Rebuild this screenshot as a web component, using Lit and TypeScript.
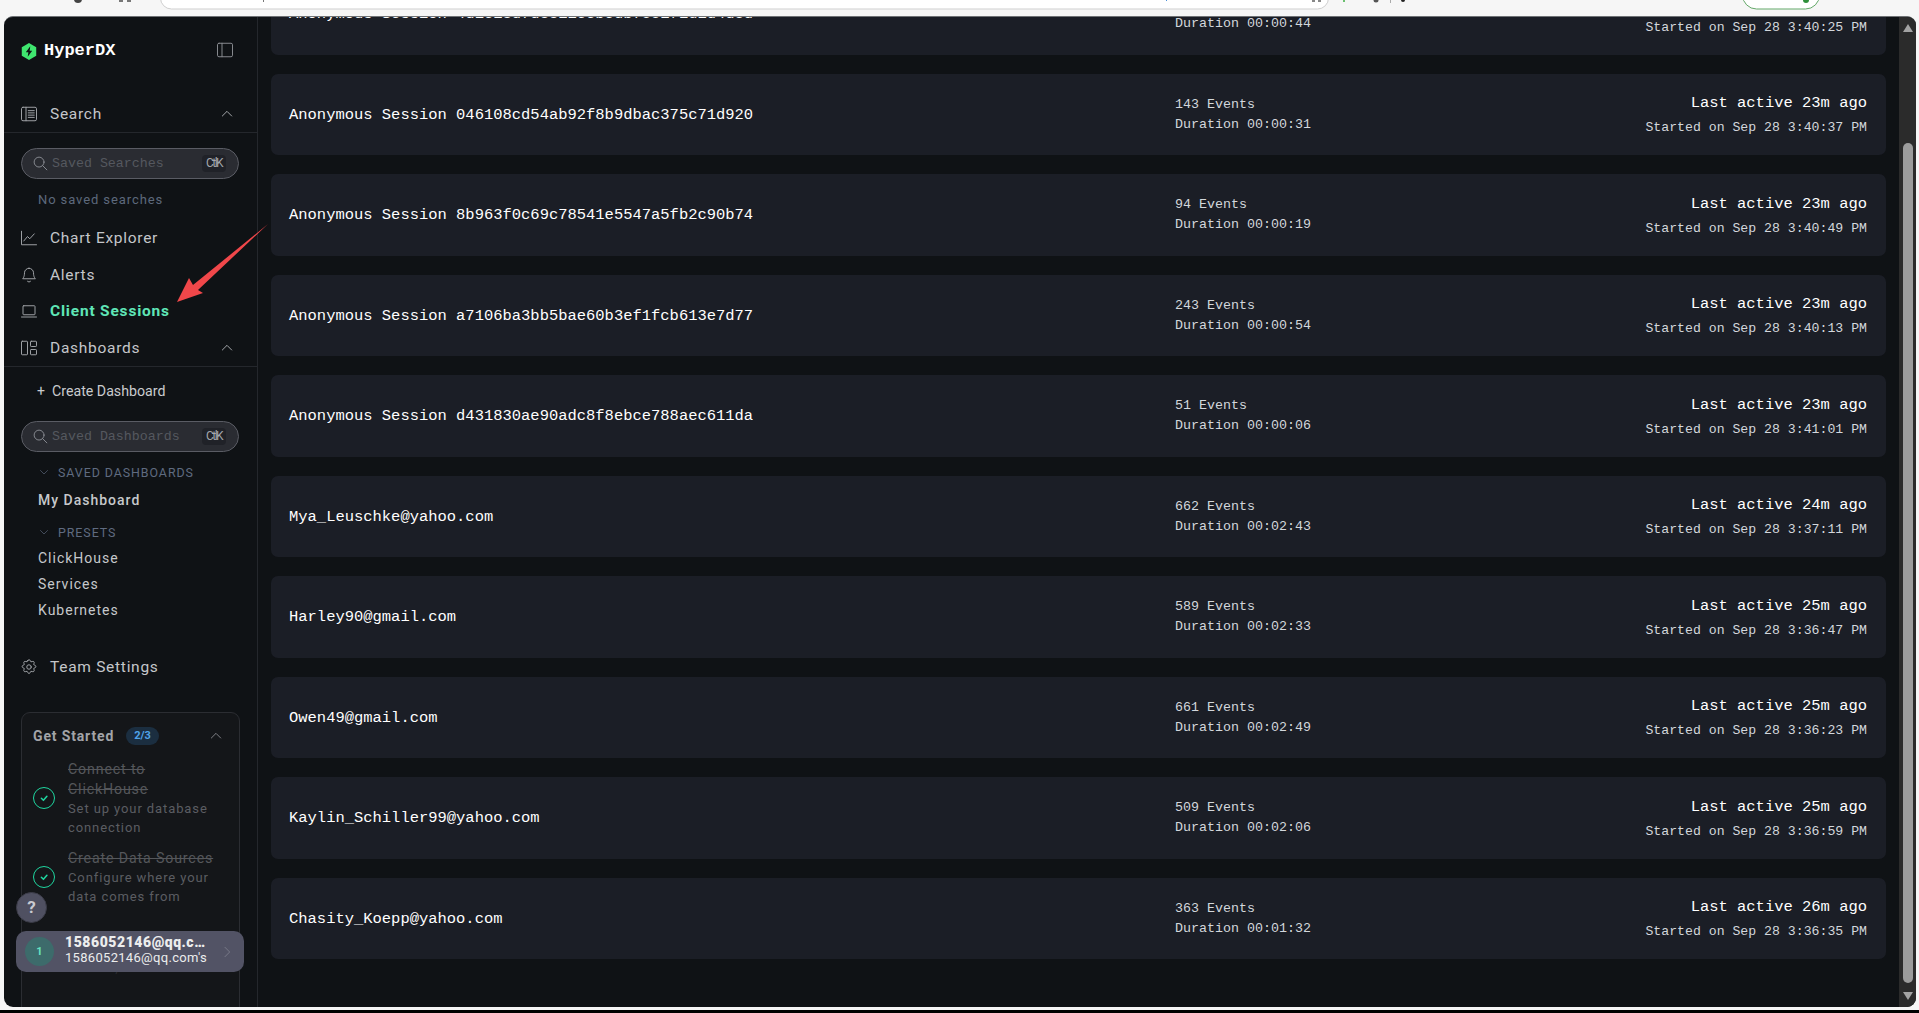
import { LitElement, html, css, svg } from "lit";
import { customElement } from "lit/decorators.js";

const sessions = [
  ["Anonymous Session 4d1e18d7d3811eebedb7551f1d1d4d3d", "212 Events", "Duration 00:00:44", "Last active 23m ago", "Started on Sep 28 3:40:25 PM"],
  ["Anonymous Session 046108cd54ab92f8b9dbac375c71d920", "143 Events", "Duration 00:00:31", "Last active 23m ago", "Started on Sep 28 3:40:37 PM"],
  ["Anonymous Session 8b963f0c69c78541e5547a5fb2c90b74", "94 Events", "Duration 00:00:19", "Last active 23m ago", "Started on Sep 28 3:40:49 PM"],
  ["Anonymous Session a7106ba3bb5bae60b3ef1fcb613e7d77", "243 Events", "Duration 00:00:54", "Last active 23m ago", "Started on Sep 28 3:40:13 PM"],
  ["Anonymous Session d431830ae90adc8f8ebce788aec611da", "51 Events", "Duration 00:00:06", "Last active 23m ago", "Started on Sep 28 3:41:01 PM"],
  ["Mya_Leuschke@yahoo.com", "662 Events", "Duration 00:02:43", "Last active 24m ago", "Started on Sep 28 3:37:11 PM"],
  ["Harley90@gmail.com", "589 Events", "Duration 00:02:33", "Last active 25m ago", "Started on Sep 28 3:36:47 PM"],
  ["Owen49@gmail.com", "661 Events", "Duration 00:02:49", "Last active 25m ago", "Started on Sep 28 3:36:23 PM"],
  ["Kaylin_Schiller99@yahoo.com", "509 Events", "Duration 00:02:06", "Last active 25m ago", "Started on Sep 28 3:36:59 PM"],
  ["Chasity_Koepp@yahoo.com", "363 Events", "Duration 00:01:32", "Last active 26m ago", "Started on Sep 28 3:36:35 PM"],
];

const ic = (body: unknown, size = 18, cls = "") => html`<svg class="ic ${cls}" width=${size} height=${size} viewBox="0 0 24 24" fill="none" stroke="currentColor" stroke-width="1.300" stroke-linecap="round" stroke-linejoin="round">${body}</svg>`;

const icons = {
  table: svg`<rect x="2" y="3" width="20" height="18" rx="2"/><path d="M8 3v18M11 7.500h8M11 10.500h8M11 13.500h8M11 16.500h8"/>`,
  chart: svg`<path d="M2 3v18h20"/><path d="M5 16l5-6 3 3 6-6.500"/>`,
  bell: svg`<path d="M12 3a6 6 0 0 0-6 6c0 6-2.500 8-2.500 8h17S18 15 18 9a6 6 0 0 0-6-6z"/><path d="M10 20.500c.8 1 3.200 1 4 0"/>`,
  laptop: svg`<rect x="4" y="5" width="16" height="12" rx="1"/><path d="M2 20h20"/>`,
  dash: svg`<rect x="2" y="3" width="8" height="18" rx="1"/><rect x="14" y="3" width="8" height="7" rx="1"/><rect x="14" y="14" width="8" height="7" rx="1"/>`,
  gear: svg`<circle cx="12" cy="12" r="3"/><path d="M10.300 3.600c.4-1.800 3-1.800 3.400 0a1.700 1.700 0 0 0 2.600 1.100c1.500-1 3.400.9 2.400 2.400a1.700 1.700 0 0 0 1.100 2.600c1.800.4 1.800 3 0 3.400a1.700 1.700 0 0 0-1.100 2.600c1 1.500-.9 3.400-2.400 2.400a1.700 1.700 0 0 0-2.600 1.100c-.4 1.800-3 1.800-3.400 0a1.700 1.700 0 0 0-2.600-1.100c-1.500 1-3.400-.9-2.400-2.400a1.700 1.700 0 0 0-1.100-2.600c-1.800-.4-1.800-3 0-3.400a1.700 1.700 0 0 0 1.100-2.600c-1-1.500.9-3.400 2.400-2.400a1.700 1.700 0 0 0 2.600-1.100z"/>`,
  up: svg`<path d="M5 15l7-7 7 7"/>`,
  down: svg`<path d="M5 9l7 7 7-7"/>`,
  right: svg`<path d="M9 5l7 7-7 7"/>`,
  search: svg`<circle cx="10" cy="10" r="7"/><path d="M21 21l-6-6"/>`,
  side: svg`<rect x="2" y="3" width="20" height="18" rx="2"/><path d="M8 3v18"/>`,
  check: svg`<path d="M7.500 12.500l3.500 3.500 6-7" stroke-width="2.600"/>`,
};

@customElement("app-root")
export class AppRoot extends LitElement {
  static styles = css`
    :host { display: block; height: 1013px; background: #f6f6f6; overflow: hidden; font-family: Roboto, "Noto Sans", sans-serif; }
    * { box-sizing: border-box; }
    .chrome { display: block; width: 1919px; height: 16px; }
    .frame { display: flex; height: 991px; margin: 0 3px 0 4px; border-radius: 9px; overflow: hidden; background: #0f1215; border-top: 1px solid #6f7275; }
    .foot { height: 3px; margin-top: 3px; background: #000; }
    .ic { display: block; flex: none; }

    .side { width: 254px; flex: none; border-right: 1px solid #24272c; position: relative; overflow: hidden; color: #c6c8cb; }
    .logo { display: flex; align-items: center; height: 28px; margin-top: 20px; padding: 0 23px 0 17px; }
    .logo svg.hex { margin-right: 7px; }
    .logo b { font: 700 17px/28px "Liberation Mono", monospace; color: #fff; flex: 1; }
    .logo .ic { color: #8a8d92; margin-top: -2px; }

    .nav { display: flex; align-items: center; padding: 0 22px 0 16px; height: 36.700px; font-size: 15.500px; letter-spacing: .72px; color: #c4c6ca; }
    .nav .ic { color: #a0a3a8; margin-right: 12px; }
    .nav span { flex: 1; }
    .nav .ic.chev { margin: 0; color: #b9bcc0; }
    .nav.line { height: 37px; border-bottom: 1px solid #24272c; }
    .nav.act { color: #5fe6b7; font-weight: 700; letter-spacing: .8px; }
    .first { margin-top: 30.500px; }
    .gapa { margin-top: 10px; }
    .gapb { margin-top: 26px; }

    .search { display: flex; align-items: center; height: 31px; margin: 0 18px 0 17px; padding: 0 12px 0 10px; border-radius: 16px; background: #2a2c32; border: 1px solid #5a5c64; color: #8d9096; }
    .search .ic { margin-right: 3px; }
    .search span { flex: 1; font: 13.300px "Liberation Mono", monospace; color: #55585f; white-space: nowrap; }
    .search kbd { width: 24px; height: 17px; border-radius: 4px; background: #202228; color: #a4a7ad; font: 12px/16px Roboto, sans-serif; text-align: center; letter-spacing: -1.500px; }

    .s1 { margin-top: 15px; }
    .none { margin: 11px 0 0 34px; height: 20px; line-height: 20px; font-size: 13px; letter-spacing: .9px; color: #5d697c; }
    .create { display: flex; align-items: center; height: 24px; margin: 12.500px 0 18px 33px; font-size: 14.200px; color: #c9cbce; }
    .create i { font-style: normal; width: 15px; font-size: 14px; }
    .group { display: flex; align-items: center; margin-left: 34px; font-size: 12.400px; letter-spacing: .95px; color: #5f6b80; height: 20px; }
    .group .ic { margin-right: 8px; color: #5f6b80; }
    .g1 { margin-top: 10px; }
    .g2 { margin-top: 9px; }
    .l1 { margin-top: 5px; }
    .l2 { margin-top: 3px; }
    .link { margin-left: 34px; height: 26px; line-height: 26px; font-size: 14px; letter-spacing: 1px; color: #c6c8cb; font-weight: 500; }
    .link.reg { font-weight: 400; }

    .box { margin: 26px 17px 0; height: 320px; border: 1px solid #2b2d32; border-radius: 9px; background: #141619; padding: 0 11px; overflow: hidden; }
    .boxh { display: flex; align-items: center; height: 44px; margin: 1px 0 1px; }
    .boxh b { font-size: 14px; letter-spacing: .85px; color: #a2a4a8; font-weight: 700; }
    .badge { margin-left: 12px; padding: 0 8px; height: 18px; line-height: 18px; border-radius: 9px; background: #1b2e40; color: #4fa3e8; font-size: 11px; font-weight: 700; }
    .boxh .ic { margin-left: auto; margin-right: 4px; color: #8e9095; }
    .item { display: flex; align-items: center; gap: 13px; margin-bottom: 10px; }
    .circle { width: 22px; height: 22px; flex: none; border-radius: 50%; border: 1.300px solid #1fd6a0; color: #1fd6a0; display: flex; align-items: center; justify-content: center; }
    .item div.t { width: 146px; font-size: 13px; letter-spacing: .9px; line-height: 19.500px; color: #5b5d62; }
    .item s { display: block; color: #55575b; font-size: 14.200px; letter-spacing: .85px; line-height: 20px; white-space: normal; }
    .faded { margin: 51px 0 0 35px; font-size: 13px; letter-spacing: .5px; color: #2a2b2f; line-height: 20px; }

    .help { position: absolute; left: 12px; top: 875px; width: 31px; height: 31px; border-radius: 50%; background: #4f5061; border: 1px solid #3b3c48; color: #c9cad0; font: 700 17px/29px Roboto, sans-serif; text-align: center; }
    .user { position: absolute; left: 12px; top: 914px; width: 228px; height: 41px; border-radius: 10px; background: #525365; display: flex; align-items: center; padding: 0 9px; color: #eceded; }
    .av { width: 29px; height: 29px; border-radius: 50%; background: #3d6b6b; color: #66e3c0; font-size: 11px; font-weight: 700; text-align: center; line-height: 29px; flex: none; margin-right: 11px; }
    .uname { width: 146px; flex: none; padding-bottom: 3px; }
    .uname b, .uname span { display: block; overflow: hidden; white-space: nowrap; text-overflow: ellipsis; line-height: 15px; font-size: 13px; letter-spacing: .3px; }
    .uname b { font-weight: 900; font-size: 14px; letter-spacing: .55px; }
    .user .ic { margin-left: auto; color: #7d7e8c; }

    .main { flex: 1; overflow: hidden; padding: 0 13px; }
    .list { display: flex; flex-direction: column; gap: 19px; margin-top: -43.700px; }
    .card { flex: none; height: 81.500px; border-radius: 7px; background: #1b1e26; padding: 0 19px 0 18px; display: flex; align-items: center; font-family: "Liberation Mono", monospace; }
    .title { width: 886px; flex: none; font-size: 15.470px; color: #fff; white-space: nowrap; }
    .mid { font-size: 13.330px; line-height: 20px; color: #d3d7dc; }
    .right { margin-left: auto; text-align: right; }
    .right b { display: block; font-weight: 400; font-size: 15.470px; line-height: 24px; margin-bottom: 3px; color: #fff; }
    .right span { display: block; font-size: 13.200px; line-height: 20px; color: #d3d7dc; }

    .bar { width: 17px; flex: none; background: #2b2b2b; display: flex; flex-direction: column; align-items: center; color: #a3a3a3; padding-top: 7px; }
    .thumb { width: 10px; height: 840px; border-radius: 5px; background: #9c9c9c; margin: 111px 0 9px; }

    .arrow { position: absolute; left: 0; top: 0; pointer-events: none; }
  `;

  render() {
    return html`
      <svg class="chrome" viewBox="0 0 1919 16" fill="none">
        <circle cx="78" cy="-1" r="4" fill="#444"/>
        <rect x="119" y="-3" width="4" height="5" fill="#777"/><rect x="127" y="-3" width="4" height="5" fill="#777"/>
        <rect x="160.500" y="-20" width="1168" height="29" rx="11" fill="#fff" stroke="#cfcfcf"/>
        <rect x="263" y="-1" width="1" height="3" fill="#777"/>
        <rect x="1166" y="-1" width="1" height="2" fill="#4a90d9"/>
        <rect x="1312" y="-1" width="3" height="3" fill="#888"/><rect x="1318" y="-1" width="3" height="3" fill="#888"/>
        <rect x="1343" y="-1" width="2" height="3" fill="#6cc070"/>
        <circle cx="1376" cy="0" r="2.500" fill="#555"/>
        <rect x="1390" y="-1" width="1" height="4" fill="#aaa"/>
        <circle cx="1403" cy="0" r="2" fill="#222"/>
        <rect x="1742.500" y="-20" width="77" height="29" rx="14" fill="#fff" stroke="#63a868"/>
        <circle cx="1806" cy="0" r="3" fill="#2f8f3a"/>
      </svg>
      <div class="frame">
        <aside class="side">
          <div class="logo">
            <svg class="hex" width="16" height="17" viewBox="0 0 15 16"><path d="M7.500 0l6.800 3.900v8.200L7.500 16 .7 12.100V3.900z" fill="#3fe66f"/><path d="M8.700 3L4.500 8.800h2.400L6.300 13l4.200-5.800H8.100z" fill="#0f1215"/></svg>
            <b>HyperDX</b>
            ${ic(icons.side, 18)}
          </div>
          <div class="nav line first">${ic(icons.table)}<span>Search</span>${ic(icons.up, 16, "chev")}</div>
          <div class="search s1">${ic(icons.search, 17)}<span>Saved Searches</span><kbd>CtlK</kbd></div>
          <div class="none">No saved searches</div>
          <div class="nav gapa">${ic(icons.chart)}<span>Chart Explorer</span></div>
          <div class="nav">${ic(icons.bell)}<span>Alerts</span></div>
          <div class="nav act">${ic(icons.laptop)}<span>Client Sessions</span></div>
          <div class="nav line">${ic(icons.dash)}<span>Dashboards</span>${ic(icons.up, 16, "chev")}</div>
          <div class="create"><i>+</i>Create Dashboard</div>
          <div class="search">${ic(icons.search, 17)}<span>Saved Dashboards</span><kbd>CtlK</kbd></div>
          <div class="group g1">${ic(icons.down, 12)}SAVED DASHBOARDS</div>
          <div class="link l1">My Dashboard</div>
          <div class="group g2">${ic(icons.down, 12)}PRESETS</div>
          <div class="link reg l2">ClickHouse</div>
          <div class="link reg">Services</div>
          <div class="link reg">Kubernetes</div>
          <div class="nav gapb">${ic(icons.gear)}<span>Team Settings</span></div>
          <div class="box">
            <div class="boxh"><b>Get Started</b><span class="badge">2/3</span>${ic(icons.up, 16)}</div>
            <div class="item"><div class="circle">${ic(icons.check, 14)}</div><div class="t"><s>Connect to ClickHouse</s>Set up your database connection</div></div>
            <div class="item"><div class="circle">${ic(icons.check, 14)}</div><div class="t"><s>Create Data Sources</s>Configure where your data comes from</div></div>
            <div class="faded">metrics, or traces</div>
          </div>
          <div class="help">?</div>
          <div class="user">
            <div class="av">1</div>
            <div class="uname"><b>1586052146@qq.com</b><span>1586052146@qq.com's</span></div>
            ${ic(icons.right, 16)}
          </div>
        </aside>
        <main class="main">
          <div class="list">
            ${sessions.map(s => html`
              <div class="card">
                <div class="title">${s[0]}</div>
                <div class="mid">${s[1]}<br>${s[2]}</div>
                <div class="right"><b>${s[3]}</b><span>${s[4]}</span></div>
              </div>`)}
          </div>
        </main>
        <div class="bar">
          <svg width="10" height="8" viewBox="0 0 10 8"><path d="M5 0l5 8H0z" fill="currentColor"/></svg>
          <div class="thumb"></div>
          <svg width="10" height="8" viewBox="0 0 10 8"><path d="M5 8L0 0h10z" fill="currentColor"/></svg>
        </div>
      </div>
      <div class="foot"></div>
      <svg class="arrow" width="300" height="320" viewBox="0 0 300 320"><path d="M177 302L189 278 193 285 268 224 198 290 203 293z" fill="#f0474a"/></svg>
    `;
  }
}
